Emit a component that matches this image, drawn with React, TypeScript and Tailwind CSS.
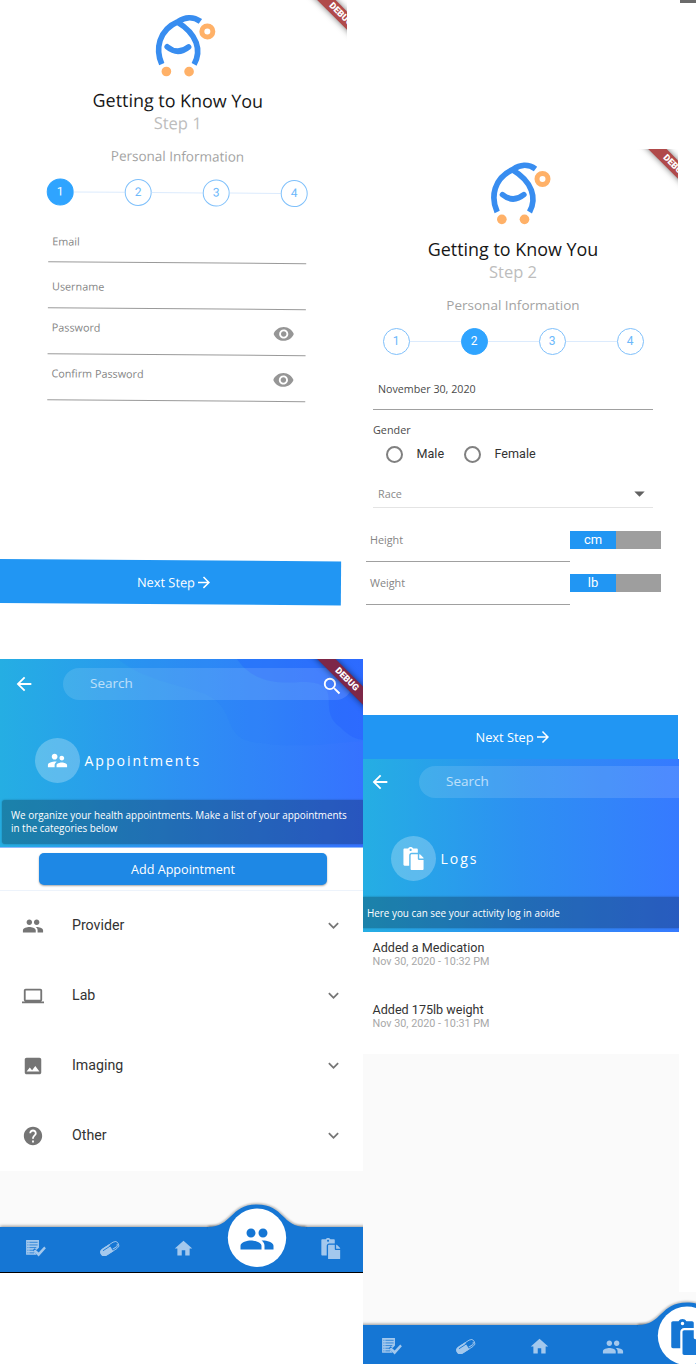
import type { ReactNode } from "react";
import {
  MdArrowBack,
  MdArrowDropDown,
  MdArrowForward,
  MdExpandMore,
  MdHelp,
  MdHome,
  MdImage,
  MdLaptop,
  MdPeople,
  MdRemoveRedEye,
  MdSearch,
  MdSupervisorAccount,
} from "react-icons/md";
import { FaPaste } from "react-icons/fa";

function Logo() {
  return (
    <svg className="h-[67px] w-[120px]" viewBox="277.5 60 360 201" fill="none">
      <g stroke="#388df0" strokeWidth="17">
        <path d="M410 216C390 172 399 114 458 88C478 74 503 71 525 87" />
        <path d="M455 89C516 125 530 175 507 216" />
        <path d="M426 164Q458 190 490 164" strokeLinecap="round" />
      </g>
      <circle cx="546" cy="117" r="16.5" stroke="#ffb168" strokeWidth="15" />
      <circle cx="424" cy="238" r="14.5" fill="#ffb168" />
      <circle cx="492" cy="238" r="14.5" fill="#ffb168" />
    </svg>
  );
}

function DebugRibbon({ place, tone, label = true }: { place: string; tone: string; label?: boolean }) {
  return (
    <div
      className={`absolute flex h-[12.5px] w-[100px] rotate-45 items-center justify-center text-[9px] font-black text-white shadow-[0_0_6px_rgba(0,0,0,0.55)] ${place} ${tone}`}
      style={{ fontFamily: "Roboto, sans-serif" }}
    >
      {label && "DEBUG"}
    </div>
  );
}

function Intro({ step, logoClass = "" }: { step: number; logoClass?: string }) {
  return (
    <div className="flex w-[349px] flex-col items-center pt-[11px]">
      <div className={logoClass}>
        <Logo />
      </div>
      <h1 className="mt-[9.5px] text-[17.9px] leading-6 whitespace-nowrap text-[#161616]">Getting to Know You</h1>
      <p className="-mt-[1px] text-[16.5px] leading-6 text-[#bdbdbd]">Step {step}</p>
      <p className="mt-[9px] text-[13.5px] leading-6 whitespace-nowrap text-[#a3a3a3]">Personal Information</p>
      <div className="mt-[11px] flex items-center">
        {[1, 2, 3, 4].map((n) => (
          <div key={n} className="flex items-center">
            {n > 1 && <div className="h-px w-[51px] bg-[#dcebfd]" />}
            <div
              className={`flex size-[27px] items-center justify-center rounded-full border text-[12px] ${
                n === step ? "border-[#2fa4ff] bg-[#2fa4ff] text-white" : "border-[#7fc0fb] text-[#6cb8fb]"
              }`}
              style={{ fontFamily: "Roboto, sans-serif" }}
            >
              {n}
            </div>
          </div>
        ))}
      </div>
    </div>
  );
}

function NextButton({ className }: { className: string }) {
  return (
    <button className={`flex items-center bg-[#2196f3] pt-[2px] text-[12.8px] text-white ${className}`}>
      Next Step
      <MdArrowForward className="-mt-px size-[18px]" />
    </button>
  );
}

const accountFields = [
  { label: "Email", pad: "pt-[17px]", secret: false },
  { label: "Username", pad: "pt-[16.5px]", secret: false },
  { label: "Password", pad: "pt-[11px]", secret: true },
  { label: "Confirm Password", pad: "pt-[11px]", secret: true },
];

function AccountScreen() {
  return (
    <section className="relative h-[659px] w-[347px] overflow-hidden">
      <div className="flex h-[603px] w-[345px] origin-[0_580px] rotate-[0.4deg] flex-col">
        <div className="-mt-px">
          <Intro step={1} logoClass="pt-px -mb-px pr-[2px]" />
        </div>
        <div className="mt-[11px] ml-[45.5px] w-[258px]">
          {accountFields.map((f) => (
            <div key={f.label} className={`flex h-[46px] justify-between border-b border-[#9a9a9a] pr-[11px] pl-[4.5px] ${f.pad}`}>
              <span className="text-[10.8px] leading-4 text-[#858585]">{f.label}</span>
              {f.secret && <MdRemoveRedEye className="mt-[2.5px] size-[22px] text-[#969696]" />}
            </div>
          ))}
        </div>
        <NextButton className="mt-auto -ml-1 h-[44.4px] w-[345px] shrink-0 pl-[141px]" />
      </div>
      <DebugRibbon place="top-[8px] left-[291px]" tone="bg-[#b04a4a]" />
    </section>
  );
}

function UnitRow({ label, unit }: { label: string; unit: string }) {
  return (
    <div className="flex h-[43px]">
      <div className="ml-[3px] w-[204px] border-b border-[#a0a0a0] pt-[13.5px] pl-1 text-[10.8px] leading-4 text-[#858585]">{label}</div>
      <div className="mt-[12px] flex h-[18px] w-[91px] bg-[#9e9e9e]">
        <div className="flex w-[46px] items-center justify-center bg-[#2196f3] text-[13px] text-white" style={{ fontFamily: "Roboto, sans-serif" }}>
          {unit}
        </div>
      </div>
    </div>
  );
}

function Radio({ label }: { label: string }) {
  return (
    <label className="flex w-[78px] items-center gap-[14px] text-[12.6px] text-[#333]" style={{ fontFamily: "Roboto, sans-serif" }}>
      <span className="size-[16.5px] shrink-0 rounded-full border-2 border-[#808080]" />
      {label}
    </label>
  );
}

function DetailsScreen() {
  return (
    <section className="relative flex h-[610px] w-[315px] flex-col overflow-hidden bg-white">
      <div className="-ml-[24.5px]">
        <Intro step={2} />
      </div>
      <div className="mt-[26px] ml-[10px] h-[29px] w-[280px] border-b border-[#a0a0a0] pl-[5px] text-[10.7px] leading-4 text-[#4a4a4a]">
        November 30, 2020
      </div>
      <p className="mt-[12px] ml-[10px] text-[10.8px] leading-4 text-[#4a4a4a]">Gender</p>
      <div className="mt-[9px] ml-[23px] flex h-4">
        <Radio label="Male" />
        <Radio label="Female" />
      </div>
      <div className="mt-[23px] ml-[10px] flex h-[22px] w-[280px] justify-between border-b border-[#e4e4e4] pr-px pl-[5px]">
        <span className="text-[10.8px] leading-4 text-[#8a8a8a]">Race</span>
        <MdArrowDropDown className="-mt-[5px] size-[25px] text-[#616161]" />
      </div>
      <div className="mt-[11px]">
        <UnitRow label="Height" unit="cm" />
        <UnitRow label="Weight" unit="lb" />
      </div>
      <NextButton className="mt-auto h-[44.5px] w-[315px] shrink-0 pl-[112.5px]" />
      <DebugRibbon place="top-[11px] left-[262px]" tone="bg-[#b04a4a]" />
    </section>
  );
}

function SearchRow({ className, icon }: { className: string; icon?: boolean }) {
  return (
    <div className={`relative flex shrink-0 items-center ${className}`}>
      <MdArrowBack className="ml-[13px] size-[22px] shrink-0 text-white" />
      <div className="ml-[28px] flex h-[31.5px] w-[289px] shrink-0 items-center rounded-full bg-white/12 pr-[9px] pl-[27px] text-[13.5px] text-white/65">
        <span className="-mt-[2px]">Search</span>
        {icon && <MdSearch className="mt-[5px] ml-auto size-[22.5px] text-white" />}
      </div>
    </div>
  );
}

function Hero({ icon, title, className }: { icon: ReactNode; title: string; className: string }) {
  return (
    <div className={`relative flex items-center ${className}`}>
      <div className="flex size-[45px] items-center justify-center rounded-full bg-white/25 text-white">{icon}</div>
      <h2 className="ml-[5px] text-[14.1px] tracking-[1.95px] text-white">{title}</h2>
    </div>
  );
}

function ListCheckIcon({ className }: { className: string }) {
  return (
    <svg className={className} viewBox="0 0 60 50" fill="currentColor">
      <path d="M0 0H39V23L32 30L26 25L20 31L31 43V45H0Z" />
      <path d="M10 7H35M10 15H35M10 23H31M10 31H22M10 39H24M4 7H7M4 15H7M4 23H7M4 31H7M4 39H7" stroke="#1576d4" strokeWidth="2.4" />
      <path d="M22 33L28 29L38 38L55 20L60 25L38 50Z" />
    </svg>
  );
}

function PillIcon({ className }: { className: string }) {
  return (
    <svg className={className} viewBox="0 0 58 46">
      <g transform="rotate(-33 29 23)">
        <rect x="-1" y="12" width="60" height="22" rx="11" fill="none" stroke="currentColor" strokeWidth="2.5" />
        <path d="M10 11H34V35H10A12 12 0 0 1 10 11Z" fill="currentColor" />
        <path d="M10 17H42" stroke="#1576d4" strokeWidth="2.5" strokeLinecap="round" />
        <path d="M36 29H50Q54 28 55 23" stroke="currentColor" strokeWidth="3" fill="none" />
      </g>
    </svg>
  );
}

function BottomNav({ active }: { active: 3 | 4 }) {
  const bump = active === 3 ? "left-[197.5px]" : "left-[271.5px]";
  const items = [
    <ListCheckIcon className="h-[16.5px] w-[20px]" />,
    <PillIcon className="h-[15.5px] w-[19.5px]" />,
    <MdHome className="size-[21px]" />,
    <MdPeople className="size-[22px]" />,
    <FaPaste className="size-[21.5px]" />,
  ];
  return (
    <nav className="relative h-[45px] w-[368px] shrink-0 bg-[#1576d4] shadow-[0_-1px_3px_rgba(0,0,0,0.4)]">
      <svg className={`absolute -top-[30px] h-[78px] w-[120px] ${bump}`} viewBox="0 -30 120 78">
        <path
          d="M11 0C35 0 33 -22.5 60 -22.5C87 -22.5 85 0 109 0"
          fill="none"
          stroke="#000"
          strokeOpacity="0.35"
          strokeWidth="2"
          className="blur-[1px]"
        />
        <path d="M11 0C35 0 33 -22.5 60 -22.5C87 -22.5 85 0 109 0V6H11Z" fill="#1576d4" />
        <circle cx="60" cy="10.8" r="29.2" fill="#fff" />
      </svg>
      <div className="relative grid h-[43px] grid-cols-5">
        {items.map((item, i) => (
          <div key={i} className="flex items-center justify-center text-[#a3c8ed]">
            {i !== active && item}
            {i === active && i === 3 && <MdPeople className="-mt-[20px] size-[36px] shrink-0 text-[#1576d4]" />}
            {i === active && i === 4 && <FaPaste className="-mt-[20px] size-[36px] shrink-0 text-[#1576d4]" />}
          </div>
        ))}
      </div>
    </nav>
  );
}

const categories = [
  { label: "Provider", Icon: MdPeople },
  { label: "Lab", Icon: MdLaptop },
  { label: "Imaging", Icon: MdImage },
  { label: "Other", Icon: MdHelp },
];

function AppointmentsScreen() {
  return (
    <section className="relative flex h-[614px] w-[363px] flex-col overflow-hidden border-b border-black bg-[#fafafa]">
      <header className="relative flex h-[188.5px] shrink-0 flex-col border-b border-[#8fb9fb] bg-linear-to-r from-[#25aee3] via-[#2d90f2] to-[#3672ff]">
        <svg className="absolute inset-0 h-[188px] w-[363px]" viewBox="0 0 363 188">
          <path d="M118 0C145 22 175 24 205 35C240 50 218 82 262 84C300 90 330 84 363 82V0Z" fill="#2474ff" fillOpacity="0.12" />
          <path d="M237 0C252 22 275 25 300 23C348 22 315 50 340 68C350 78 356 80 363 81V0Z" fill="#1c55ff" fillOpacity="0.25" />
        </svg>
        <SearchRow className="mt-[9px]" icon />
        <Hero className="mt-[38.5px] ml-[34.5px]" title="Appointments" icon={<MdSupervisorAccount className="size-[23px]" />} />
        <p className="relative mt-[16.5px] ml-[2px] h-[44.5px] rounded-l-[3px] bg-black/25 pt-[9.5px] pl-[9px] text-[9.88px] leading-[13.3px] whitespace-nowrap text-white shadow-[0_0_2px_rgba(0,0,0,0.3)]">
          We organize your health appointments. Make a list of your appointments
          <br />
          in the categories below
        </p>
      </header>
      <div className="h-[43.5px] shrink-0 border-b border-[#edf3fb] bg-white pt-[5.5px] pl-[39px]">
        <button className="flex h-8 w-[288px] items-center justify-center rounded-[5px] bg-[#1e88e5] pt-[2px] text-[12.6px] text-white shadow-[0_1px_2px_rgba(0,0,0,0.35)]">
          Add Appointment
        </button>
      </div>
      <ul className="h-[279.5px] shrink-0 bg-white" style={{ fontFamily: "Roboto, sans-serif" }}>
        {categories.map(({ label, Icon }) => (
          <li key={label} className="flex h-[70px] items-center pr-[19px] pb-px pl-[21.5px] text-[14.2px] text-[#333]">
            <Icon className="size-[22px] text-[#757575]" />
            <span className="ml-[28.5px] pt-px">{label}</span>
            <MdExpandMore className="ml-auto size-[21px] text-[#757575]" />
          </li>
        ))}
      </ul>
      <div className="mt-auto -ml-[0.5px] shrink-0">
        <BottomNav active={3} />
      </div>
      <DebugRibbon place="top-[14px] left-[297px]" tone="bg-[#7d2748]" />
    </section>
  );
}

const logs = [
  { text: "Added a Medication", time: "Nov 30, 2020 - 10:32 PM" },
  { text: "Added 175lb weight", time: "Nov 30, 2020 - 10:31 PM" },
];

function LogsScreen() {
  return (
    <section className="flex h-[605px] w-[333px] flex-col overflow-hidden">
      <div className="flex h-[533px] w-[316px] shrink-0 flex-col bg-[#fafafa]">
        <header className="relative flex h-[173px] shrink-0 flex-col overflow-hidden bg-linear-to-r from-[#25aee3] via-[#2d90f2] to-[#367aff]">
          <SearchRow className="mt-[7px] -ml-[7px]" />
          <Hero className="mt-[38.5px] ml-[27.5px]" title="Logs" icon={<FaPaste className="size-[23px]" />} />
          <p className="relative mt-[16px] h-[31px] bg-black/25 pl-1 text-[9.88px] leading-[32px] text-white shadow-[0_0_2px_rgba(0,0,0,0.3)]">
            Here you can see your activity log in aoide
          </p>
          <DebugRibbon place="-top-[6px] left-[292px]" tone="bg-[#7d2748]" label={false} />
        </header>
        <ul className="h-[122px] bg-white pt-[9px]" style={{ fontFamily: "Roboto, sans-serif" }}>
          {logs.map((l) => (
            <li key={l.time} className="h-[61.5px] pl-[9.5px] whitespace-nowrap">
              <p className="text-[12.6px] leading-[14px] text-[#333]">{l.text}</p>
              <p className="text-[10.8px] leading-[13px] text-[#a8a8a8]">{l.time}</p>
            </li>
          ))}
        </ul>
      </div>
      <div className="h-[72px] w-[333px] shrink-0 bg-[#fafafa] pt-[33px]">
        <div className="-ml-[7.5px]">
          <BottomNav active={4} />
        </div>
      </div>
    </section>
  );
}

export default function App() {
  return (
    <main className="flex h-[1364px] w-[696px] overflow-hidden bg-white" style={{ fontFamily: '"Open Sans", sans-serif' }}>
      <div className="flex w-[363px] shrink-0 flex-col">
        <AccountScreen />
        <AppointmentsScreen />
      </div>
      <div className="flex w-[333px] shrink-0 flex-col">
        <div className="h-[149px]">
          <div className="ml-auto h-[3px] w-4 bg-[#6b6b6b]" />
        </div>
        <DetailsScreen />
        <LogsScreen />
      </div>
    </main>
  );
}
